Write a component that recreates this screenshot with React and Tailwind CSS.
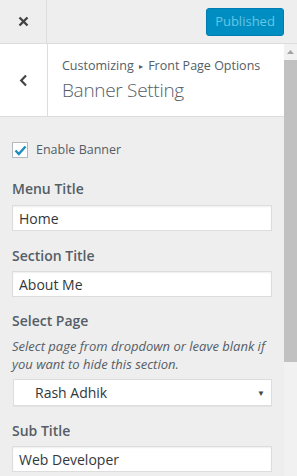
import { useState } from "react";

const font = { fontFamily: '"Open Sans", "Noto Sans", sans-serif' };

function Field({ label, value, onChange }) {
  return (
    <div className="mt-[15px]">
      <label className="block text-[14px] leading-[20px] font-semibold text-[#555d66]">
        {label}
      </label>
      <input
        type="text"
        value={value}
        onChange={(e) => onChange(e.target.value)}
        className="mt-[5px] block w-full h-[26px] px-[6px] bg-white border border-[#ddd] shadow-[inset_0_1px_2px_rgba(0,0,0,0.07)] text-[14px] text-[#32373c] outline-none"
      />
    </div>
  );
}

export default function App() {
  const [enabled, setEnabled] = useState(true);
  const [menuTitle, setMenuTitle] = useState("Home");
  const [sectionTitle, setSectionTitle] = useState("About Me");
  const [subTitle, setSubTitle] = useState("Web Developer");

  return (
    <div className="w-[297px] h-[476px] overflow-hidden bg-[#eee] flex flex-col" style={font}>
      {/* top bar */}
      <div className="h-[44px] shrink-0 flex items-center border-b border-[#ddd] bg-[#eee]">
        <button className="w-[47px] h-full flex items-center justify-center border-r border-[#ddd] text-[#444]">
          <svg width="11" height="11" viewBox="0 0 11 11">
            <path d="M1.5 1.5 L9.5 9.5 M9.5 1.5 L1.5 9.5" stroke="currentColor" strokeWidth="2.4" />
          </svg>
        </button>
        <div className="flex-1" />
        <button
          disabled
          className="mr-[13px] h-[28px] w-[78px] rounded-[3px] bg-[#008ec2] border border-[#007cb2] text-[#66c6e4] text-[13px] leading-none"
        >
          Published
        </button>
      </div>

      <div className="flex-1 flex min-h-0">
        <div className="flex-1 min-w-0">
          {/* section header */}
          <div className="h-[73px] flex bg-white border-b border-[#ddd]">
            <button className="w-[48px] shrink-0 flex items-center justify-center border-r border-[#ddd] text-[#444]">
              <svg width="9" height="13" viewBox="0 0 9 13">
                <path d="M7 1.5 L2.2 6.5 L7 11.5" fill="none" stroke="currentColor" strokeWidth="2.2" />
              </svg>
            </button>
            <div className="pl-[14px] pt-[13px] text-[#555d66]">
              <div className="text-[12.5px] leading-[18px] whitespace-nowrap">
                Customizing <span className="text-[8px] align-[1px] mx-[2px]">▸</span> Front Page Options
              </div>
              <div className="text-[19px] leading-[26px] font-light tracking-[-0.3px] mt-[2px]">
                Banner Setting
              </div>
            </div>
          </div>

          {/* controls */}
          <div className="px-[12px] pt-[25px]">
            <label className="flex items-center gap-[8px] h-[16px] text-[12.5px] text-[#555d66]">
              <span
                onClick={() => setEnabled(!enabled)}
                className="w-[16px] h-[16px] shrink-0 bg-white border border-[#b4b9be] flex items-center justify-center"
              >
                {enabled && (
                  <svg width="13" height="11" viewBox="0 0 13 11">
                    <path d="M1.5 5.5 L4.8 9 L11.5 1.5" fill="none" stroke="#1e8cbe" strokeWidth="2.4" />
                  </svg>
                )}
              </span>
              Enable Banner
            </label>

            <div className="mt-[21px]">
              <label className="block text-[14px] leading-[20px] font-semibold text-[#555d66]">
                Menu Title
              </label>
              <input
                type="text"
                value={menuTitle}
                onChange={(e) => setMenuTitle(e.target.value)}
                className="mt-[6px] block w-full h-[26px] px-[6px] bg-white border border-[#ddd] shadow-[inset_0_1px_2px_rgba(0,0,0,0.07)] text-[14px] text-[#32373c] outline-none"
              />
            </div>

            <Field label="Section Title" value={sectionTitle} onChange={setSectionTitle} />

            <div className="mt-[14px]">
              <label className="block text-[14px] leading-[20px] font-semibold text-[#555d66]">
                Select Page
              </label>
              <p className="mt-[6px] text-[13px] leading-[18px] italic text-[#555d66]">
                Select page from dropdown or leave blank if you want to hide this section.
              </p>
              <div className="mt-[6px] ml-[1px] h-[27px] flex items-center bg-white border border-[#ddd] shadow-[0_1px_0_rgba(0,0,0,0.04)] text-[14px] text-[#32373c]">
                <span className="pl-[21px] flex-1">Rash Adhik</span>
                <span className="pr-[6px] text-[8px] text-[#444]">▼</span>
              </div>
            </div>

            <Field label="Sub Title" value={subTitle} onChange={setSubTitle} />
          </div>
        </div>

        {/* scrollbar */}
        <div className="w-[13px] shrink-0 bg-[#f1f1f1] flex flex-col items-center">
          <div className="h-[16px] flex items-center justify-center">
            <svg width="7" height="4" viewBox="0 0 7 4">
              <path d="M0 4 L3.5 0 L7 4 Z" fill="#a3a3a3" />
            </svg>
          </div>
          <div className="w-full h-[302px] bg-[#c1c1c1]" />
        </div>
      </div>
    </div>
  );
}
